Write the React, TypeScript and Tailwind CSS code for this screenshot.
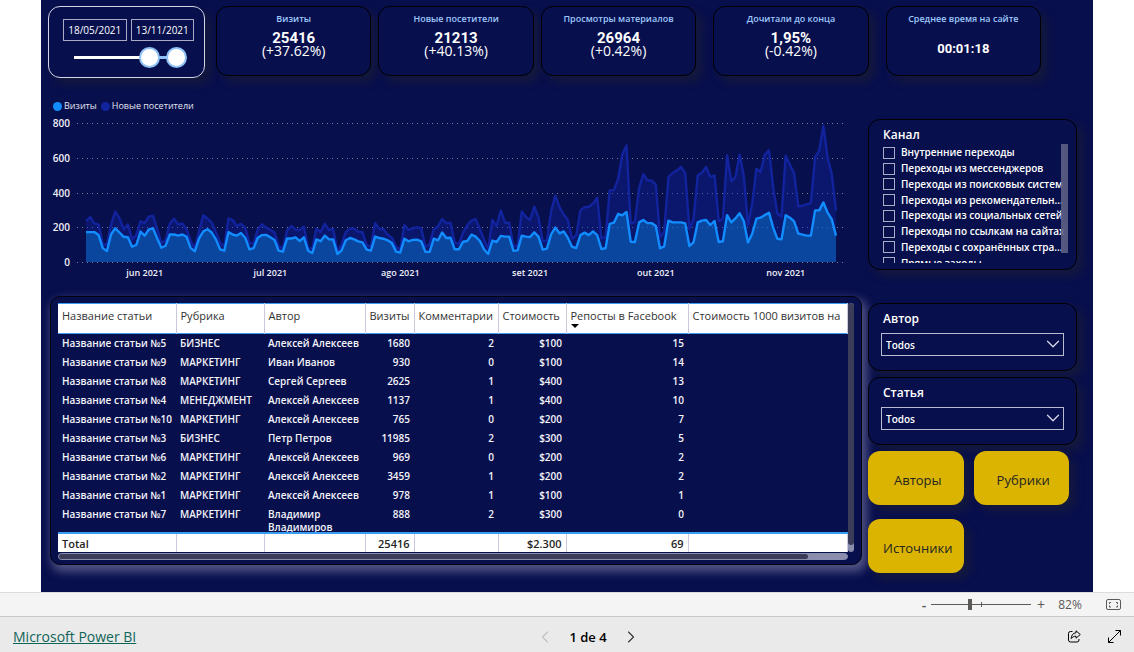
import { useState } from "react";
import { ChevronDown, ChevronLeft, ChevronRight } from "lucide-react";

const metrics = [
  { title: "Визиты", value: "25416", change: "(+37.62%)" },
  { title: "Новые посетители", value: "21213", change: "(+40.13%)" },
  { title: "Просмотры материалов", value: "26964", change: "(+0.42%)" },
  { title: "Дочитали до конца", value: "1,95%", change: "(-0.42%)" },
  { title: "Среднее время на сайте", value: "00:01:18", change: "" },
];

// one value per day, 18 May - 13 Nov
const visits = [
  172, 172, 172, 155, 80, 63, 160, 194, 170, 145, 143, 88, 98, 175, 152, 187, 194, 136, 82, 94,
  158, 158, 152, 158, 145, 80, 62, 136, 176, 188, 170, 130, 73, 65, 172, 158, 152, 167, 140, 73,
  80, 140, 155, 156, 142, 127, 65, 60, 136, 135, 142, 121, 142, 65, 52, 130, 120, 152, 130, 130,
  46, 67, 125, 138, 130, 119, 113, 71, 65, 146, 138, 134, 125, 109, 60, 54, 134, 119, 127, 129,
  119, 58, 58, 134, 125, 169, 138, 140, 73, 73, 117, 121, 157, 146, 121, 73, 46, 123, 115, 150,
  146, 146, 65, 67, 152, 146, 144, 171, 146, 71, 77, 159, 198, 165, 176, 140, 88, 80, 155, 169,
  155, 176, 155, 75, 79, 219, 226, 276, 269, 288, 117, 115, 228, 242, 224, 224, 207, 79, 90, 238,
  228, 228, 228, 222, 92, 113, 228, 238, 242, 213, 236, 115, 119, 270, 228, 251, 280, 236, 113, 163,
  249, 255, 270, 284, 198, 134, 130, 269, 255, 234, 163, 157, 152, 152, 297, 297, 343, 284, 246, 152,
];

const visitors = [
  234, 259, 222, 215, 105, 98, 217, 290, 251, 188, 217, 130, 155, 234, 224, 261, 267, 188, 109, 125,
  220, 249, 215, 222, 188, 121, 79, 178, 269, 249, 226, 172, 111, 88, 251, 242, 207, 219, 198, 109,
  107, 188, 217, 198, 184, 169, 92, 77, 182, 207, 186, 184, 203, 79, 75, 192, 172, 220, 184, 190,
  59, 102, 172, 194, 192, 174, 172, 96, 88, 224, 190, 188, 157, 140, 88, 69, 213, 184, 194, 201,
  194, 88, 102, 188, 205, 247, 224, 226, 111, 105, 169, 211, 238, 247, 188, 129, 73, 242, 207, 297,
  226, 226, 92, 92, 291, 259, 242, 318, 255, 119, 125, 293, 382, 316, 274, 242, 136, 152, 297, 315,
  318, 336, 370, 136, 144, 412, 414, 476, 620, 671, 222, 230, 424, 506, 470, 468, 447, 142, 175, 489,
  512, 526, 547, 512, 190, 246, 497, 514, 547, 489, 499, 236, 249, 614, 464, 489, 618, 495, 213, 332,
  537, 518, 618, 643, 428, 280, 261, 612, 560, 510, 320, 324, 332, 340, 604, 641, 784, 600, 504, 297,
];

const months = [
  { label: "jun 2021", day: 14 },
  { label: "jul 2021", day: 44 },
  { label: "ago 2021", day: 75 },
  { label: "set 2021", day: 106 },
  { label: "out 2021", day: 136 },
  { label: "nov 2021", day: 167 },
];

const channels = [
  "Внутренние переходы",
  "Переходы из мессенджеров",
  "Переходы из поисковых систем",
  "Переходы из рекомендательн...",
  "Переходы из социальных сетей",
  "Переходы по ссылкам на сайтах",
  "Переходы с сохранённых стра...",
  "Прямые заходы",
];

const columns = [
  { title: "Название статьи", width: "w-[118px]" },
  { title: "Рубрика", width: "w-[88px]" },
  { title: "Автор", width: "w-[101px]" },
  { title: "Визиты", width: "w-[49px]" },
  { title: "Комментарии", width: "w-[84px]" },
  { title: "Стоимость", width: "w-[68px]" },
  { title: "Репосты в Facebook", width: "w-[122px]" },
  { title: "Стоимость 1000 визитов на", width: "" },
];

const rows = [
  ["Название статьи №5", "БИЗНЕС", "Алексей Алексеев", "1680", "2", "$100", "15"],
  ["Название статьи №9", "МАРКЕТИНГ", "Иван Иванов", "930", "0", "$100", "14"],
  ["Название статьи №8", "МАРКЕТИНГ", "Сергей Сергеев", "2625", "1", "$400", "13"],
  ["Название статьи №4", "МЕНЕДЖМЕНТ", "Алексей Алексеев", "1137", "1", "$400", "10"],
  ["Название статьи №10", "МАРКЕТИНГ", "Алексей Алексеев", "765", "0", "$200", "7"],
  ["Название статьи №3", "БИЗНЕС", "Петр Петров", "11985", "2", "$300", "5"],
  ["Название статьи №6", "МАРКЕТИНГ", "Алексей Алексеев", "969", "0", "$200", "2"],
  ["Название статьи №2", "МАРКЕТИНГ", "Алексей Алексеев", "3459", "1", "$200", "2"],
  ["Название статьи №1", "МАРКЕТИНГ", "Алексей Алексеев", "978", "1", "$100", "1"],
  ["Название статьи №7", "МАРКЕТИНГ", "Владимир Владимиров", "888", "2", "$300", "0"],
];

const totals = ["Total", "", "", "25416", "", "$2.300", "69", ""];

const panel =
  "rounded-xl border border-black bg-[#080f4d] shadow-[6px_6px_10px_rgba(44,44,30,0.35)]";

const dayX = (day: number) => 36 + (day * 750) / 179;
const valueY = (value: number) => 147 - (value * 139) / 800;
const toPoints = (data: number[]) =>
  data.map((v, i) => `${dayX(i).toFixed(1)},${valueY(v).toFixed(1)}`).join(" ");

function DateSlicer() {
  const range =
    "pointer-events-none absolute inset-0 h-[21px] w-full appearance-none bg-transparent [&::-webkit-slider-thumb]:pointer-events-auto [&::-webkit-slider-thumb]:h-[21px] [&::-webkit-slider-thumb]:w-[21px] [&::-webkit-slider-thumb]:appearance-none [&::-webkit-slider-thumb]:rounded-full [&::-webkit-slider-thumb]:border-2 [&::-webkit-slider-thumb]:border-[#8fc1f5] [&::-webkit-slider-thumb]:bg-white";
  const box =
    "h-[22px] w-full min-w-0 border border-[#a9acc4] bg-transparent text-center text-[10px] text-white outline-none";
  return (
    <div className="h-[72px] w-[157px] shrink-0 rounded-xl border border-[#d3d5e4] pt-3 pr-[10px] pl-[14px] shadow-[6px_6px_10px_rgba(44,44,30,0.35)]">
      <div className="flex gap-1">
        <input aria-label="Дата начала" className={box} defaultValue="18/05/2021" />
        <input aria-label="Дата окончания" className={box} defaultValue="13/11/2021" />
      </div>
      <div className="relative mt-[6px] ml-[11px] h-[21px] w-[113px]">
        <div className="absolute top-[9px] left-0 flex h-[3px] w-[102px]">
          <div className="flex-1 bg-white" />
          <div className="w-[27px] bg-[#8fc1f5]" />
        </div>
        <input type="range" aria-label="Начало периода" className={range} defaultValue={71} />
        <input type="range" aria-label="Конец периода" className={range} defaultValue={100} />
      </div>
    </div>
  );
}

function MetricCard({ title, value, change }: { title: string; value: string; change: string }) {
  return (
    <section className={`${panel} h-[70px] w-full pt-1 text-center whitespace-nowrap`}>
      <h2 className="text-[9px] leading-4 font-semibold text-[#9cc8fb]">{title}</h2>
      {change ? (
        <>
          <p className="mt-1 font-['Roboto'] text-[15px] leading-[14px] font-bold text-white">{value}</p>
          <p className="text-sm leading-3 text-white">{change}</p>
        </>
      ) : (
        <p className="mt-3 font-['Roboto'] text-[13px] leading-5 font-bold text-white">{value}</p>
      )}
    </section>
  );
}

function VisitsChart() {
  return (
    <figure>
      <figcaption className="flex h-4 items-center gap-1 pl-[3px] text-[9px] font-medium text-[#e4e6f2]">
        <span className="flex items-center gap-[2px]">
          <i className="h-[9px] w-[9px] rounded-full bg-[#118dff]" />
          Визиты
        </span>
        <span className="flex items-center gap-[2px]">
          <i className="h-[9px] w-[9px] rounded-full bg-[#12239e]" />
          Новые посетители
        </span>
      </figcaption>
      <svg viewBox="0 0 812 168" className="mt-px block w-full" role="img" aria-label="Визиты и новые посетители">
        {[0, 200, 400, 600, 800].map((v) => (
          <g key={v}>
            <line
              x1="27"
              x2="796"
              y1={Math.round(valueY(v)) + 0.5}
              y2={Math.round(valueY(v)) + 0.5}
              stroke="#7d809c"
              strokeDasharray="1 4"
            />
            <text x="20" y={valueY(v) + 4} textAnchor="end" fontSize="10" fontWeight="600" fill="#f1f1f8">
              {v}
            </text>
          </g>
        ))}
        <polygon points={`36,147 ${toPoints(visitors)} 786,147`} fill="#12239e" fillOpacity="0.4" />
        <polyline points={toPoints(visitors)} fill="none" stroke="#12239e" strokeWidth="2.4" strokeLinejoin="round" />
        <polygon points={`36,147 ${toPoints(visits)} 786,147`} fill="#0b7ad0" fillOpacity="0.48" />
        <polyline points={toPoints(visits)} fill="none" stroke="#118dff" strokeWidth="2.4" strokeLinejoin="round" />
        {months.map((m) => (
          <text key={m.label} x={dayX(m.day)} y="161" textAnchor="middle" fontSize="9" fontWeight="600" fill="#f1f1f8">
            {m.label}
          </text>
        ))}
      </svg>
    </figure>
  );
}

function ArticlesTable() {
  return (
    <section className="mt-[13px] h-[269px] rounded-[10px] border border-[#02030f] bg-[#080f4d] pt-[6px] pr-[7px] pl-[7px] shadow-[3px_5px_10px_2px_rgba(150,150,185,0.5)]">
      <div className="flex">
        <table className="w-full table-fixed border-collapse overflow-hidden">
          <colgroup>
            {columns.map((c) => (
              <col key={c.title} className={c.width} />
            ))}
          </colgroup>
          <thead>
            <tr className="h-[30px] border-y border-[#3a9bf2] bg-white">
              {columns.map((c) => (
                <th
                  key={c.title}
                  scope="col"
                  className="border-r border-[#c9c8dc] px-1 pt-1 text-left align-top text-[11px] leading-4 font-normal whitespace-nowrap text-[#333]"
                >
                  {c.title}
                  {c.title === "Репосты в Facebook" && (
                    <span className="block h-0 w-0 border-x-4 border-t-4 border-x-transparent border-t-black" />
                  )}
                </th>
              ))}
            </tr>
          </thead>
          <tbody className="text-[10px] leading-[19px] font-semibold text-[#f4f4fa]">
            {rows.map((row, r) => (
              <tr key={row[0]} className="align-top">
                {row.map((cell, i) =>
                  r === rows.length - 1 && i === 2 ? (
                    <td key={i} className="px-1">
                      <div className="h-[27px] overflow-hidden pt-[3px] leading-[13px]">{cell}</div>
                    </td>
                  ) : (
                    <td key={i} className={i > 2 ? "px-1 text-right" : "px-1 whitespace-nowrap"}>
                      {cell}
                    </td>
                  )
                )}
                <td />
              </tr>
            ))}
          </tbody>
          <tfoot>
            <tr className="h-[19px] border-t-2 border-t-[#3a9bf2] bg-white text-[11px] leading-[17px] font-semibold text-[#252423]">
              {totals.map((t, i) => (
                <td key={i} className={`border-r border-[#c9c8dc] px-1 ${i > 2 ? "text-right" : ""}`}>
                  {t}
                </td>
              ))}
            </tr>
          </tfoot>
        </table>
        <div className="flex w-[6px] shrink-0 flex-col rounded-full bg-[#8a8dac]">
          <div className="h-[242px] rounded-full bg-[#3b3d58]" />
        </div>
      </div>
      <div className="mt-px mr-[6px] h-[7px] rounded-full border border-[#8a8dac] bg-[#8a8dac]">
        <div className="h-full w-[95%] rounded-full bg-[#3b3d58]" />
      </div>
    </section>
  );
}

function ChannelFilter() {
  return (
    <fieldset className={`${panel} relative h-[151px] pt-[7px] pl-[14px]`}>
      <legend className="float-left w-full text-xs leading-4 font-semibold text-white">Канал</legend>
      <div className="clear-both h-[120px] overflow-hidden">
        <div className="grid h-[128px] auto-rows-fr pt-[2px]">
          {channels.map((name) => (
            <label
              key={name}
              className="flex items-center gap-[6px] text-[10px] leading-[15px] font-semibold whitespace-nowrap text-white"
            >
              <input type="checkbox" className="h-3 w-3 shrink-0 appearance-none border border-[#a9acc4]" />
              {name}
            </label>
          ))}
        </div>
      </div>
      {/* scrollbar lies over the longer labels */}
      <div className="absolute top-6 right-2 h-[109px] w-[7px] bg-[#5d6185]/90" />
    </fieldset>
  );
}

function SelectFilter({ id, title }: { id: string; title: string }) {
  return (
    <div className={`${panel} h-[68px] px-3 pt-[7px]`}>
      <label htmlFor={id} className="block pl-[2px] text-xs leading-4 font-semibold text-white">
        {title}
      </label>
      <div className="relative mt-[6px]">
        <select
          id={id}
          className="block h-[23px] w-full appearance-none border border-[#b9bbcf] bg-[#080f4d] pt-px pl-1 text-[10px] font-semibold text-white outline-none"
        >
          <option>Todos</option>
        </select>
        <ChevronDown
          className="pointer-events-none absolute top-0 right-0 h-[22px] w-[22px] text-[#d5d7e6]"
          strokeWidth={1.4}
        />
      </div>
    </div>
  );
}

function NavButton({ children }: { children: string }) {
  return (
    <button className="h-[54px] rounded-xl bg-[#dab400] pt-[6px] pl-1 text-[13px] text-[#252423] shadow-[6px_6px_10px_rgba(44,44,30,0.35)]">
      {children}
    </button>
  );
}

function ZoomBar() {
  const [zoom, setZoom] = useState(39);
  return (
    <div className="flex h-6 items-center justify-end border-t border-[#dcdcdc] bg-[#f4f4f4] pr-[13px] text-[#5b5a58]">
      <button aria-label="Уменьшить" className="w-[14px] text-center text-sm leading-4 font-semibold">
        -
      </button>
      <div className="relative h-3 w-[100px]">
        <div className="absolute top-[3px] left-[50px] h-[5px] w-px bg-[#5b5a58]" />
        <input
          type="range"
          aria-label="Масштаб"
          value={zoom}
          onChange={(e) => setZoom(Number(e.target.value))}
          className="absolute inset-0 h-3 w-full appearance-none bg-transparent bg-[linear-gradient(#5b5a58,#5b5a58)] bg-[length:100%_1px] bg-center bg-no-repeat [&::-webkit-slider-thumb]:h-[11px] [&::-webkit-slider-thumb]:w-1 [&::-webkit-slider-thumb]:appearance-none [&::-webkit-slider-thumb]:bg-[#5b5a58]"
        />
      </div>
      <button aria-label="Увеличить" className="w-5 text-center text-sm leading-4">
        +
      </button>
      <span className="w-[38px] text-center text-xs">82%</span>
      <button aria-label="По размеру страницы" className="ml-[17px]">
        <svg width="15" height="11" viewBox="0 0 15 11" fill="none" stroke="currentColor">
          <rect x="0.5" y="0.5" width="14" height="10" rx="1.5" />
          <path d="M3.500 5V3.500H5M10 3.500h1.500V5M3.500 6.500V8H5M10 8h1.500V6.500" />
        </svg>
      </button>
    </div>
  );
}

function EmbedFooter() {
  return (
    <footer className="grid flex-1 grid-cols-3 items-center border-t border-[#c8c8c8] bg-[#eaeaea] px-[13px] pt-1">
      <a href="#powerbi" className="justify-self-start text-sm leading-5 text-[#0f6458] underline">
        Microsoft Power BI
      </a>
      <nav className="flex items-center justify-center gap-[14px] pl-[42px] text-[13px] leading-5 font-semibold text-black">
        <button aria-label="Предыдущая страница" disabled className="text-[#c0c0c0]">
          <ChevronLeft className="h-5 w-5" strokeWidth={1.3} />
        </button>
        <span>1 de 4</span>
        <button aria-label="Следующая страница" className="text-[#333]">
          <ChevronRight className="h-5 w-5" strokeWidth={1.3} />
        </button>
      </nav>
      <div className="flex justify-end gap-[27px] text-black">
        <button aria-label="Поделиться">
          <svg width="13" height="13" viewBox="0 0 13 13" fill="none" stroke="currentColor" strokeLinejoin="round">
            <path d="M4.500 1.500H2.500a2 2 0 0 0-2 2v6.500a2 2 0 0 0 2 2h6.500a2 2 0 0 0 2-2V9" />
            <path d="M8 .8l4.300 3.700L8 8.200V6.200C5.800 6.200 4.300 7 3.200 8.600 3.300 5.400 5 3 8 2.800z" />
          </svg>
        </button>
        <button aria-label="Полный экран">
          <svg width="13" height="13" viewBox="0 0 13 13" fill="none" stroke="currentColor">
            <path d="M7.500.5h5v5M12.500.5l-12 12M.5 7.500v5h5" />
          </svg>
        </button>
      </div>
    </footer>
  );
}

export default function App() {
  return (
    <div className="flex min-h-screen flex-col bg-white font-['Open_Sans','Noto_Sans',sans-serif]">
      <main className="mx-auto w-full max-w-[1052px] bg-[#080f4d] pb-[19px]">
        <div className="flex items-start pt-[6px] pr-[52px] pl-[7px]">
          <DateSlicer />
          <div className="ml-[11px] flex flex-1 gap-[7px]">
            {metrics.map((m, i) => (
              <div key={m.title} className={i > 2 ? "ml-[10px] flex-1" : "flex-1"}>
                <MetricCard {...m} />
              </div>
            ))}
          </div>
        </div>

        <div className="mt-5 flex gap-[6px] pr-4 pl-[9px]">
          <div className="min-w-0 flex-1">
            <VisitsChart />
            <ArticlesTable />
          </div>
          <aside className="mt-[21px] w-[209px] shrink-0">
            <ChannelFilter />
            <div className="mt-[33px] flex flex-col gap-[6px]">
              <SelectFilter id="author" title="Автор" />
              <SelectFilter id="article" title="Статья" />
            </div>
            <div className="mt-[6px] grid grid-cols-2 gap-x-[10px] gap-y-[14px] pr-2">
              <NavButton>Авторы</NavButton>
              <NavButton>Рубрики</NavButton>
              <NavButton>Источники</NavButton>
            </div>
          </aside>
        </div>
      </main>
      <ZoomBar />
      <EmbedFooter />
    </div>
  );
}
